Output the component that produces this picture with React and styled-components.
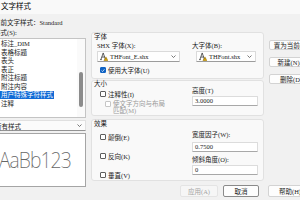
import React from "react";
import styled, { createGlobalStyle } from "styled-components";

const GlobalStyle = createGlobalStyle`
  html, body {
    margin: 0;
    padding: 0;
    background: #f1f1f1;
  }
  * {
    box-sizing: border-box;
  }
`;

const textFont = `"Liberation Serif", "Noto Sans CJK SC", serif`;

const Window = styled.div`
  width: 300px;
  height: 200px;
  overflow: hidden;
  background: #f1f1f1;
  font-family: ${textFont};
  font-size: 6.5px;
  color: #1b1b1b;
  display: flex;
  flex-direction: column;
`;
const TitleBar = styled.div`
  height: 14px;
  flex: none;
  padding: 2px 0 0 1px;
  line-height: 8px;
  background: #f9f9f9;
  font-family: "Noto Sans CJK SC", sans-serif;
  font-size: 7.5px;
  color: #000;
`;
const Body = styled.div`
  display: flex;
  gap: 5px;
  margin-left: -6px;
  padding-top: 5px;
`;
const LeftPane = styled.div`
  width: 92px;
  flex: none;
  display: flex;
  flex-direction: column;
`;
const InfoLine = styled.div`
  height: 8px;
  line-height: 8px;
  white-space: nowrap;
`;
const FieldLabel = styled.div`
  height: 8px;
  line-height: 8px;
  white-space: nowrap;
  margin-top: ${(p) => p.$mt || 0}px;
`;
const StyleList = styled.div`
  margin-top: 1px;
  height: 80px;
  display: flex;
  background: #fff;
  border: 1px solid #c4c4c4;
`;
const ListItems = styled.div`
  flex: 1;
  padding: 1px 0 0 5px;
`;
const ListItem = styled.div`
  height: 8.5px;
  line-height: 8.5px;
  white-space: nowrap;
`;
const ItemText = styled.span`
  display: inline-block;
  padding: 0 1px;
  line-height: 7.5px;
  background: ${(p) => (p.$selected ? "#0f6ad6" : "transparent")};
  color: ${(p) => (p.$selected ? "#fff" : "#1b1b1b")};
`;
const ScrollTrack = styled.div`
  width: 8px;
  padding: 0 2px;
  background: #fafafa;
`;
const ScrollThumb = styled.div`
  margin-top: 33px;
  height: 35px;
  border-radius: 2px;
  background: #8b8b8b;
`;
const FilterSelect = styled.div`
  margin-top: 2px;
  height: 11px;
  display: flex;
  align-items: center;
  justify-content: space-between;
  padding: 0 3px 0 0;
  background: #fbfbfb;
  border: 1px solid #e0e0e0;
  border-bottom-color: #939393;
`;
const Preview = styled.div`
  margin-top: 2px;
  height: 54px;
  display: flex;
  align-items: center;
  padding-left: 4px;
  background: #fff;
  border: 1px solid #a5a5a5;
  overflow: hidden;
`;
const PreviewText = styled.span`
  font-family: "Noto Sans", sans-serif;
  font-weight: 200;
  font-size: 22px;
  letter-spacing: -1px;
  color: #666;
  transform: scaleX(0.88);
  transform-origin: left center;
  white-space: nowrap;
  margin-top: -3px;
`;
const RightPane = styled.div`
  margin-top: 13px;
  display: flex;
  flex-direction: column;
`;
const Columns = styled.div`
  display: flex;
  gap: 5px;
`;
const SettingsCol = styled.div`
  width: 173px;
  display: flex;
  flex-direction: column;
`;
const Group = styled.div`
  height: ${(p) => p.$h}px;
  margin-top: ${(p) => p.$mt || 0}px;
  padding-right: 5px;
  background: #f9f9f9;
  border: 1px solid #e1e1e1;
  border-radius: 3px;
`;
const GroupTitle = styled.div`
  padding-left: 2px;
  height: ${(p) => p.$lh || 8}px;
  line-height: ${(p) => p.$lh || 8}px;
`;
const GroupGrid = styled.div`
  display: grid;
  grid-template-columns: 95px 66px;
  padding-left: 5px;
  margin-top: ${(p) => p.$mt || 0}px;
`;
const Cell = styled.div`
  display: flex;
  flex-direction: column;
  grid-column: ${(p) => (p.$span ? "1 / span 2" : "auto")};
`;
const Select = styled.div`
  margin-top: 1px;
  margin-left: ${(p) => p.$offset || 0}px;
  width: ${(p) => p.$w}px;
  height: 11px;
  display: flex;
  align-items: center;
  gap: 2px;
  padding: 0 3px 0 2px;
  background: #fefefe;
  border: 1px solid #dadada;
  border-bottom-color: #9c9c9c;
  border-radius: 1px;
`;
const SelectValue = styled.span`
  flex: 1;
  white-space: nowrap;
`;
const CheckRow = styled.div`
  display: flex;
  align-items: ${(p) => (p.$top ? "flex-start" : "center")};
  gap: 2px;
  min-height: ${(p) => p.$h || 8}px;
  margin-top: ${(p) => p.$mt || 0}px;
  padding-left: ${(p) => p.$indent || 3}px;
  color: ${(p) => (p.$disabled ? "#9a9a9a" : "#1b1b1b")};
  white-space: nowrap;
`;
const Box = styled.span`
  width: 6px;
  height: 6px;
  flex: none;
  display: flex;
  align-items: center;
  justify-content: center;
  margin-top: ${(p) => (p.$top ? 0.5 : 0)}px;
  border-radius: 1px;
  border: 1px solid
    ${(p) => (p.$checked ? "#0f63c4" : p.$disabled ? "#c6c6c6" : "#5e5e5e")};
  background: ${(p) => (p.$checked ? "#0f63c4" : "#fff")};
`;
const TwoLines = styled.span`
  line-height: 7px;
`;
const Input = styled.div`
  margin-top: ${(p) => p.$mt || 0}px;
  height: 10px;
  line-height: 8px;
  padding-left: 2px;
  background: #fff;
  border: 1px solid #dcdcdc;
  border-bottom-color: #a8a8a8;
  border-radius: 1px;
`;
const ActionCol = styled.div`
  width: 44px;
  padding-top: 8px;
  display: flex;
  flex-direction: column;
  gap: 7px;
`;
const Button = styled.div`
  width: ${(p) => p.$w || 44}px;
  height: ${(p) => p.$h || 10}px;
  margin-left: ${(p) => p.$ml || 0}px;
  flex: none;
  display: flex;
  align-items: center;
  justify-content: center;
  white-space: nowrap;
  background: ${(p) => (p.$disabled ? "#f6f6f6" : "#fdfdfd")};
  color: ${(p) => (p.$disabled ? "#a3a3a3" : "#1b1b1b")};
  border: 1px solid ${(p) => (p.$focus ? "#8a8a8a" : p.$disabled ? "#e4e4e4" : "#d3d3d3")};
  border-radius: 2px;
`;
const Footer = styled.div`
  margin-top: 4px;
  display: flex;
`;

const Chevron = () => (
  <svg width="5" height="3" viewBox="0 0 5 3">
    <polyline points="0.5,0.5 2.5,2.5 4.5,0.5" fill="none" stroke="#555" strokeWidth="0.8" />
  </svg>
);

const FontIcon = () => (
  <svg width="8" height="9" viewBox="0 0 9 10" style={{ flex: "none" }}>
    <path d="M1 8.5 L3.6 1 L6.2 8.5 M2.1 5.6 H5.1 M0.2 8.5 H2 M5.2 8.5 H7" fill="none" stroke="#222" strokeWidth="0.8" />
    <path d="M6.7 5.4 L9 9.7 H4.4 Z" fill="#f2b600" stroke="#6b4e00" strokeWidth="0.4" />
    <path d="M6.7 6.8 V8.3 M6.7 8.8 V9.1" stroke="#222" strokeWidth="0.5" />
  </svg>
);

const Check = ({ checked, disabled, top }) => (
  <Box $checked={checked} $disabled={disabled} $top={top}>
    {checked && (
      <svg width="5" height="5" viewBox="0 0 5 5">
        <polyline points="0.7,2.6 2,3.8 4.3,1" fill="none" stroke="#fff" strokeWidth="0.9" />
      </svg>
    )}
  </Box>
);

const styles = ["标注_DIM", "表格标题", "表头", "表正", "附注标题", "附注内容", "用户特殊字符样式", "注释"];
const selectedStyle = "用户特殊字符样式";

export default function App() {
  return (
    <Window>
      <GlobalStyle />
      <TitleBar>文字样式</TitleBar>
      <Body>
        <LeftPane>
          <InfoLine>当前文字样式：Standard</InfoLine>
          <FieldLabel $mt={2}>样式(S):</FieldLabel>
          <StyleList>
            <ListItems>
              {styles.map((s) => (
                <ListItem key={s}>
                  <ItemText $selected={s === selectedStyle}>{s}</ItemText>
                </ListItem>
              ))}
            </ListItems>
            <ScrollTrack>
              <ScrollThumb />
            </ScrollTrack>
          </StyleList>
          <FilterSelect>
            <span>所有样式</span>
            <Chevron />
          </FilterSelect>
          <Preview>
            <PreviewText>AaBb123</PreviewText>
          </Preview>
        </LeftPane>

        <RightPane>
          <Columns>
            <SettingsCol>
              <Group $h={47}>
                <GroupTitle>字体</GroupTitle>
                <GroupGrid $mt={1}>
                  <Cell>
                    <FieldLabel>SHX 字体(X):</FieldLabel>
                    <Select $w={83}>
                      <FontIcon />
                      <SelectValue>THFont_E.shx</SelectValue>
                      <Chevron />
                    </Select>
                  </Cell>
                  <Cell>
                    <FieldLabel>大字体(B):</FieldLabel>
                    <Select $w={60} $offset={4}>
                      <FontIcon />
                      <SelectValue>THFont.shx</SelectValue>
                      <Chevron />
                    </Select>
                  </Cell>
                  <Cell $span>
                    <CheckRow $mt={3} $h={9}>
                      <Check checked />
                      使用大字体(U)
                    </CheckRow>
                  </Cell>
                </GroupGrid>
              </Group>

              <Group $h={36} $mt={1}>
                <GroupTitle $lh={6}>大小</GroupTitle>
                <GroupGrid>
                  <Cell>
                    <CheckRow $mt={2}>
                      <Check />
                      注释性(I)
                    </CheckRow>
                    <CheckRow $mt={1} $indent={8} $top $disabled>
                      <Check disabled top />
                      <TwoLines>
                        使文字方向与布局
                        <br />
                        匹配(M)
                      </TwoLines>
                    </CheckRow>
                  </Cell>
                  <Cell>
                    <FieldLabel>高度(T)</FieldLabel>
                    <Input $mt={1}>3.0000</Input>
                  </Cell>
                </GroupGrid>
              </Group>

              <Group $h={62} $mt={3}>
                <GroupTitle>效果</GroupTitle>
                <GroupGrid>
                  <Cell>
                    <CheckRow $mt={4}>
                      <Check />
                      颠倒(E)
                    </CheckRow>
                    <CheckRow $mt={9}>
                      <Check />
                      反向(K)
                    </CheckRow>
                    <CheckRow $mt={9}>
                      <Check />
                      垂直(V)
                    </CheckRow>
                  </Cell>
                  <Cell>
                    <FieldLabel $mt={3}>宽度因子(W):</FieldLabel>
                    <Input $mt={3}>0.7500</Input>
                    <FieldLabel $mt={4}>倾斜角度(O):</FieldLabel>
                    <Input $mt={1}>0</Input>
                  </Cell>
                </GroupGrid>
              </Group>
            </SettingsCol>

            <ActionCol>
              <Button>置为当前(C)</Button>
              <Button>新建(N)...</Button>
              <Button>删除(D)</Button>
            </ActionCol>
          </Columns>

          <Footer>
            <Button $w={38} $h={12} $ml={89} $disabled>
              应用(A)
            </Button>
            <Button $w={36} $h={12} $ml={5} $focus>
              取消
            </Button>
            <Button $w={44} $h={12} $ml={9}>
              帮助(H)
            </Button>
          </Footer>
        </RightPane>
      </Body>
    </Window>
  );
}
